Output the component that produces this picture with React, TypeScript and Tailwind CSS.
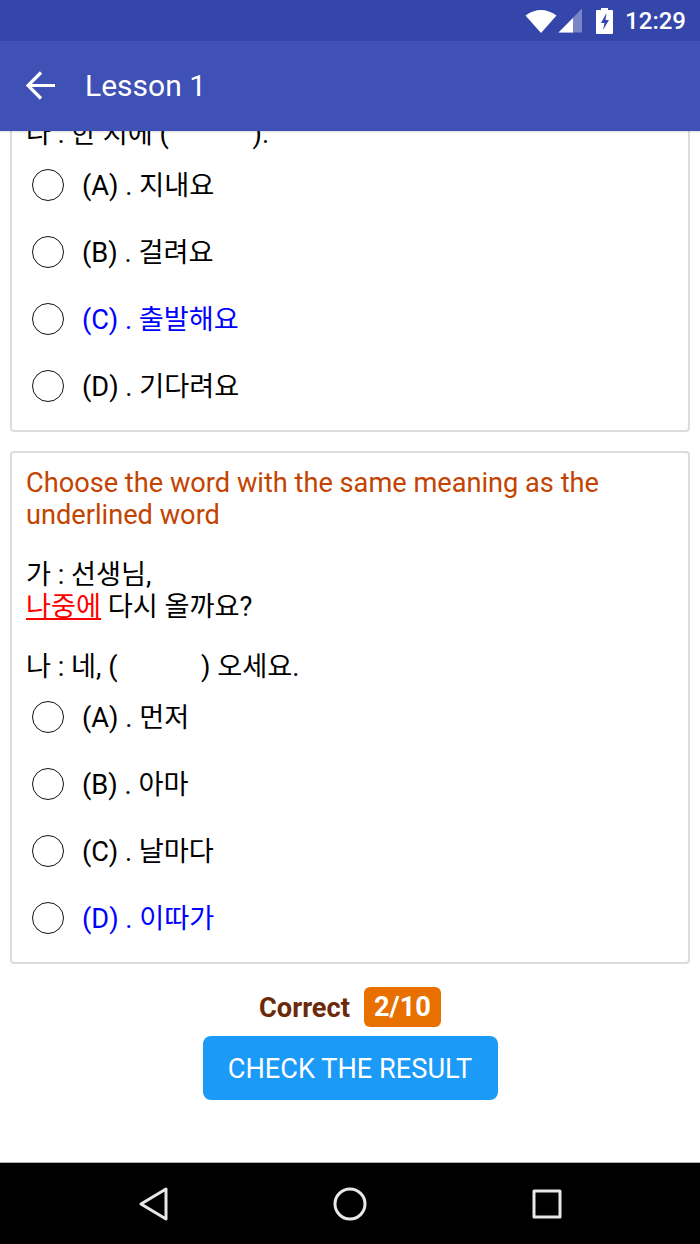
const font = { fontFamily: '"Roboto","Noto Sans CJK KR",sans-serif' };

function Option({ label, text, active }: { label: string; text: string; active?: boolean }) {
  return (
    <div className="flex h-[67px] items-center pl-[20px]">
      <span className="mb-[2px] h-[32px] w-[32px] shrink-0 rounded-full border-[1.75px] border-[#111111]" />
      <span className={`ml-[18px] text-[27.2px] leading-[32px] ${active ? "text-[#0000ff]" : "text-black"}`}>
        ({label}) . {text}
      </span>
    </div>
  );
}

export default function App() {
  return (
    <div className="flex h-[1244px] w-[700px] flex-col overflow-hidden bg-white" style={font}>
      <div className="flex h-[41px] shrink-0 items-center justify-end bg-[#3546ab] pr-[14px]">
        <svg width="32" height="26" viewBox="0 0 32 26" className="mr-[1px]">
          <path d="M0.500 7.500 Q16 -3.500 31.500 7.500 L16 25 Z" fill="#fff" />
        </svg>
        <svg width="25" height="25" viewBox="0 0 25 25" className="mr-[13px]">
          <path d="M24 0.500V24.500H0.500Z" fill="#fff" fillOpacity="0.35" />
          <path d="M15 10V24.500H0.500Z" fill="#fff" />
        </svg>
        <svg width="17" height="26" viewBox="0 0 17 26" className="mr-[12px]">
          <path d="M5 0h7v2h4a1 1 0 0 1 1 1v22a1 1 0 0 1-1 1H1a1 1 0 0 1-1-1V3a1 1 0 0 1 1-1h4z" fill="#fff" />
          <path d="M10.500 5 5 15h3.500l-1.500 7 6-10H9.500z" fill="#3546ab" />
        </svg>
        <span className="text-[24px] font-medium leading-none text-white">12:29</span>
      </div>
      <div className="z-10 flex h-[90px] shrink-0 items-center bg-[#3f51b5] pl-[26px] shadow-[0_1px_2px_rgba(0,0,0,0.15)]">
        <svg width="30" height="30" viewBox="0 0 30 30" fill="none" stroke="#fff" strokeWidth="3.200">
          <path d="M29 14.500H3M15 1.500 2 14.500l13 13" />
        </svg>
        <span className="ml-[29px] text-[30px] leading-none text-white">Lesson 1</span>
      </div>
      <main className="min-h-0 flex-1 overflow-hidden">
        <div className="-mt-[13px] mx-[10px] rounded-b-[4px] border-x-2 border-b-2 border-[#dcdcdc] pb-[10px]">
          <p className="pl-[14px] text-[27.2px] leading-[32px] text-black">나 : 한 지에 ( <span className="inline-block w-[70px]" /> ).</p>
          <div className="mt-[2px]">
            <Option label="A" text="지내요" />
            <Option label="B" text="걸려요" />
            <Option label="C" text="출발해요" active />
            <Option label="D" text="기다려요" />
          </div>
        </div>
        <div className="mx-[10px] mt-[19px] rounded-[4px] border-2 border-[#dcdcdc] pb-[10px] pt-[14px]">
          <div className="px-[14px] text-[27.2px] leading-[32px]">
            <p className="text-[#c24400]">Choose the word with the same meaning as the underlined word</p>
            <p className="mt-[28px] text-black">가 : 선생님,</p>
            <p className="text-black"><span className="text-[#ff0000] underline">나중에</span> 다시 올까요?</p>
            <p className="mt-[28px] text-black">나 : 네, ( <span className="inline-block w-[70px]" /> ) 오세요.</p>
          </div>
          <div className="mt-[1px]">
            <Option label="A" text="먼저" />
            <Option label="B" text="아마" />
            <Option label="C" text="날마다" />
            <Option label="D" text="이따가" active />
          </div>
        </div>
        <div className="mt-[23px] flex items-center justify-center">
          <span className="pt-[3px] text-[27.2px] font-bold leading-none text-[#6b2a0a]">Correct</span>
          <span className="ml-[14px] flex h-[40px] w-[77px] items-center justify-center rounded-[6px] bg-[#e87000] text-[27.2px] font-bold text-white">2/10</span>
        </div>
        <div className="mt-[9px] flex justify-center">
          <button className="h-[64px] w-[295px] rounded-[8px] bg-[#1b9af7] pt-[3px] text-[27.2px] text-white">CHECK THE RESULT</button>
        </div>
      </main>
      <nav className="flex h-[82px] shrink-0 items-center justify-between border-t border-[#b0b0b0] bg-black pl-[139px] pr-[138px]">
        <svg width="30" height="34" viewBox="0 0 30 34" fill="none" stroke="#e8e8e8" strokeWidth="3" strokeLinejoin="round">
          <path d="M27 2 2 17l25 15z" />
        </svg>
        <svg width="34" height="34" viewBox="0 0 34 34" fill="none" stroke="#e8e8e8" strokeWidth="3" className="-ml-[1px]">
          <circle cx="17" cy="17" r="15" />
        </svg>
        <svg width="30" height="30" viewBox="0 0 30 30" fill="none" stroke="#e8e8e8" strokeWidth="3" strokeLinejoin="round">
          <rect x="2" y="2" width="26" height="26" />
        </svg>
      </nav>
    </div>
  );
}
